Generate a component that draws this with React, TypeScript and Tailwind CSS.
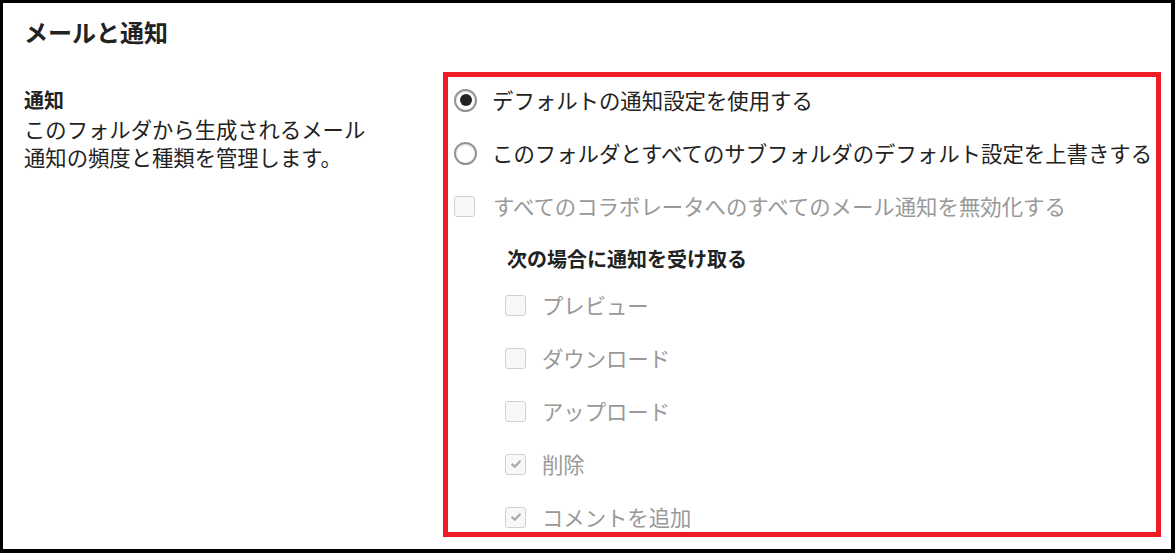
import React from 'react';

const font = "font-['Noto_Sans_CJK_JP','Noto_Sans',sans-serif]";

const events = [
    { label: "プレビュー", checked: false },
    { label: "ダウンロード", checked: false },
    { label: "アップロード", checked: false },
    { label: "削除", checked: true },
    { label: "コメントを追加", checked: true },
];

function Radio({ checked }: { checked: boolean }) {
    return (
        <span className="w-[23px] h-[23px] shrink-0 rounded-full border-2 border-[#949494] bg-white flex items-center justify-center shadow-[inset_0_1px_2px_rgba(0,0,0,0.12)]">
            {checked && <span className="w-[12px] h-[12px] rounded-full bg-[#222]" />}
        </span>
    );
}

function Box({ checked }: { checked: boolean }) {
    return (
        <span className="w-[21px] h-[21px] shrink-0 rounded-[3px] border border-[#d0d0d0] bg-[#f8f8f8] flex items-center justify-center">
            {checked && (
                <svg width="12" height="12" viewBox="0 0 12 12" fill="none">
                    <path d="M2.2 6.4 L4.8 8.8 L9.8 3.4" stroke="#a8a8a8" strokeWidth="2.2" strokeLinecap="round" strokeLinejoin="round" />
                </svg>
            )}
        </span>
    );
}

export default function App() {
    return (
        <div className={`w-[1175px] h-[553px] overflow-hidden bg-white border-black border-t-[3px] border-l-[3px] border-r-[4px] border-b-[4px] ${font} text-[#222]`}>
            <h1 className="pl-[21px] pt-[13px] text-[24px] leading-[32px] font-bold">メールと通知</h1>

            <div className="flex mt-[24px]">
                <div className="w-[440px] pl-[21px] pt-[12px] shrink-0">
                    <h2 className="text-[20px] leading-[31px] font-bold">通知</h2>
                    <p className="text-[21.33px] leading-[28px] w-[360px]">
                        このフォルダから生成されるメール通知の頻度と種類を管理します。
                    </p>
                </div>

                <div className="w-[718px] h-[465px] shrink-0 border-[5px] border-[#ee1c25] overflow-hidden pl-[6px] pt-[9px]">
                    <div className="flex flex-col gap-[25px] text-[21.4px] leading-[28px] whitespace-nowrap">
                        <label className="flex items-center h-[28px]">
                            <Radio checked />
                            <span className="ml-[15px]">デフォルトの通知設定を使用する</span>
                        </label>
                        <label className="flex items-center h-[28px]">
                            <Radio checked={false} />
                            <span className="ml-[15px]">このフォルダとすべてのサブフォルダのデフォルト設定を上書きする</span>
                        </label>
                        <label className="flex items-center h-[28px] text-[#999]">
                            <Box checked={false} />
                            <span className="ml-[18px]">すべてのコラボレータへのすべてのメール通知を無効化する</span>
                        </label>
                    </div>

                    <div className="pl-[53px] mt-[25px]">
                        <h3 className="text-[20px] leading-[28px] font-bold">次の場合に通知を受け取る</h3>
                        <div className="mt-[18px] flex flex-col gap-[25px] text-[21.33px] leading-[28px] text-[#999] whitespace-nowrap">
                            {events.map((e) => (
                                <label key={e.label} className="flex items-center h-[28px] -ml-[2px]">
                                    <Box checked={e.checked} />
                                    <span className="ml-[16px]">{e.label}</span>
                                </label>
                            ))}
                        </div>
                    </div>
                </div>
            </div>
        </div>
    );
}
